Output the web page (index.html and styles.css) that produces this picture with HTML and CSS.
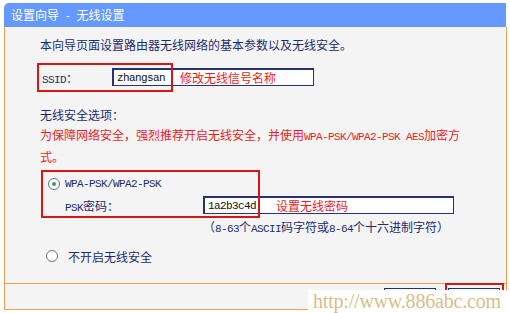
FILE: index.html
```html
<!DOCTYPE html>
<html lang="zh-CN">
<head>
<meta charset="utf-8">
<title>设置向导 - 无线设置</title>
<link rel="stylesheet" href="styles.css">
</head>
<body>
<div class="panel">
  <div class="hdr">设置向导 - 无线设置</div>
  <div class="main">
    <p class="intro">本向导页面设置路由器无线网络的基本参数以及无线安全。</p>
    <div class="row ssid">
      <span class="lbl lbl-ssid"><span class="en">SSID</span>：</span>
      <div class="field field-ssid"><span class="en">zhangsan</span><span class="note note-ssid">修改无线信号名称</span></div>
      <div class="mark mark-ssid"></div>
    </div>
    <p class="sec">无线安全选项：</p>
    <p class="warn"><span>为保障网络安全，强烈推荐开启无线安全，并使用</span><span class="en">WPA-PSK/WPA2-PSK AES</span><span>加密方</span><br><span>式。</span></p>
    <div class="wpa">
      <div class="row opt opt-wpa"><span class="radio on"></span><span class="en">WPA-PSK/WPA2-PSK</span></div>
      <div class="row psk">
        <span class="lbl lbl-psk"><span class="en">PSK</span>密码：</span>
        <div class="field field-psk"><span class="en">1a2b3c4d</span><span class="note note-psk">设置无线密码</span></div>
      </div>
      <div class="mark mark-wpa"></div>
    </div>
    <p class="hint">（<span class="en">8-63</span>个<span class="en">ASCII</span>码字符或<span class="en">8-64</span>个十六进制字符）</p>
    <div class="row opt opt-off"><span class="radio"></span>不开启无线安全</div>
  </div>
  <div class="foot">
    <button class="btn" aria-label="上一步"></button>
    <button class="btn" aria-label="下一步"></button>
    <div class="mark mark-btn"></div>
  </div>
</div>
<div class="wm">http://www.886abc.com</div>
</body>
</html>
```
FILE: styles.css
```css
html, body {
  margin: 0;
  padding: 0;
  background: #ffffff;
}
body {
  width: 510px;
  height: 313px;
  overflow: hidden;
  position: relative;
  font-family: "Noto Sans CJK SC", "Noto Sans", sans-serif;
  font-size: 12px;
  color: #1c2c6c;
}
p { margin: 0; }
.en {
  font-family: "Liberation Mono", "DejaVu Sans Mono", monospace;
  font-size: 11px;
  letter-spacing: -0.6px;
}
.panel {
  margin: 3px 0 0 4px;
  width: 503px;
}
.hdr {
  height: 24px;
  line-height: 24px;
  background: #6699ff;
  color: #ffffff;
  padding-left: 7px;
  border-top-left-radius: 5px;
  margin-right: 1px;
  word-spacing: 4px;
}
.main {
  box-sizing: border-box;
  height: 257px;
  background: #f4f4f4;
  border-left: 1px solid #f0a050;
  border-right: 1px solid #f0a050;
  border-bottom: 1px solid #f0a050;
  padding: 8px 0 0 35px;
}
.intro { line-height: 20px; }
.row {
  display: flex;
  align-items: center;
  position: relative;
}
.ssid {
  margin-top: 8px;
  height: 28px;
  padding-left: 2px;
}
.lbl-ssid { width: 70px; }
.field {
  box-sizing: border-box;
  height: 18px;
  border: 1px solid #22337a;
  border-top-width: 2px;
  border-left-width: 2px;
  background: #ffffff;
  display: flex;
  align-items: center;
  padding-left: 3px;
  color: #101010;
}
.field-ssid { width: 202px; }
.note { color: #ee1c1c; font-size: 12px; }
.note-ssid { margin-left: 15px; }
.note-psk { margin-left: 20px; }
.mark {
  position: absolute;
  border: 2px solid #dd1414;
  box-sizing: border-box;
  pointer-events: none;
}
.mark-ssid {
  left: -3px;
  top: 0;
  width: 136px;
  height: 29px;
}
.sec {
  margin-top: 14px;
  line-height: 20px;
}
.warn {
  line-height: 20px;
  color: #ee1c1c;
}
.warn .en { color: #ee1c1c; }
.wpa {
  position: relative;
  margin-top: 3px;
  padding-top: 4px;
}
.opt { height: 20px; }
.opt-wpa { padding-left: 8px; gap: 5px; }
.radio {
  box-sizing: border-box;
  width: 12px;
  height: 12px;
  border-radius: 50%;
  border: 1px solid #5f7090;
  background: #ffffff;
  display: flex;
  align-items: center;
  justify-content: center;
  flex: none;
}
.radio.on::after {
  content: "";
  width: 4px;
  height: 4px;
  border-radius: 50%;
  background: #2fa84a;
}
.psk {
  height: 20px;
  margin-top: 1px;
  padding-left: 25px;
}
.lbl-psk { width: 138px; }
.field-psk { width: 251px; }
.mark-wpa {
  left: 1px;
  top: 0;
  width: 219px;
  height: 48px;
}
.hint {
  margin-top: 2px;
  line-height: 20px;
  padding-left: 163px;
}
.opt-off {
  margin-top: 7px;
  padding-left: 6px;
  gap: 10px;
}
.foot {
  position: relative;
  box-sizing: border-box;
  height: 26px;
  background: #f4f4f4;
  border-left: 1px solid #f0a050;
  border-right: 1px solid #f0a050;
  border-bottom: 1px solid #f0a050;
  display: flex;
  justify-content: flex-end;
  align-items: flex-start;
  gap: 12px;
  padding: 4px 6px 0 0;
}
.btn {
  width: 52px;
  height: 22px;
  border: 1px solid #22337a;
  background: #f8f8ff;
  padding: 0;
}
.mark-btn {
  right: 2px;
  top: -1px;
  width: 59px;
  height: 31px;
}
.wm {
  position: absolute;
  left: 308px;
  top: 290px;
  right: 0;
  bottom: 0;
  background: #ffffff;
  font-family: "Liberation Serif", serif;
  font-size: 20px;
  line-height: 23px;
  color: #d6c088;
  padding-left: 5px;
  letter-spacing: -0.2px;
}
```
